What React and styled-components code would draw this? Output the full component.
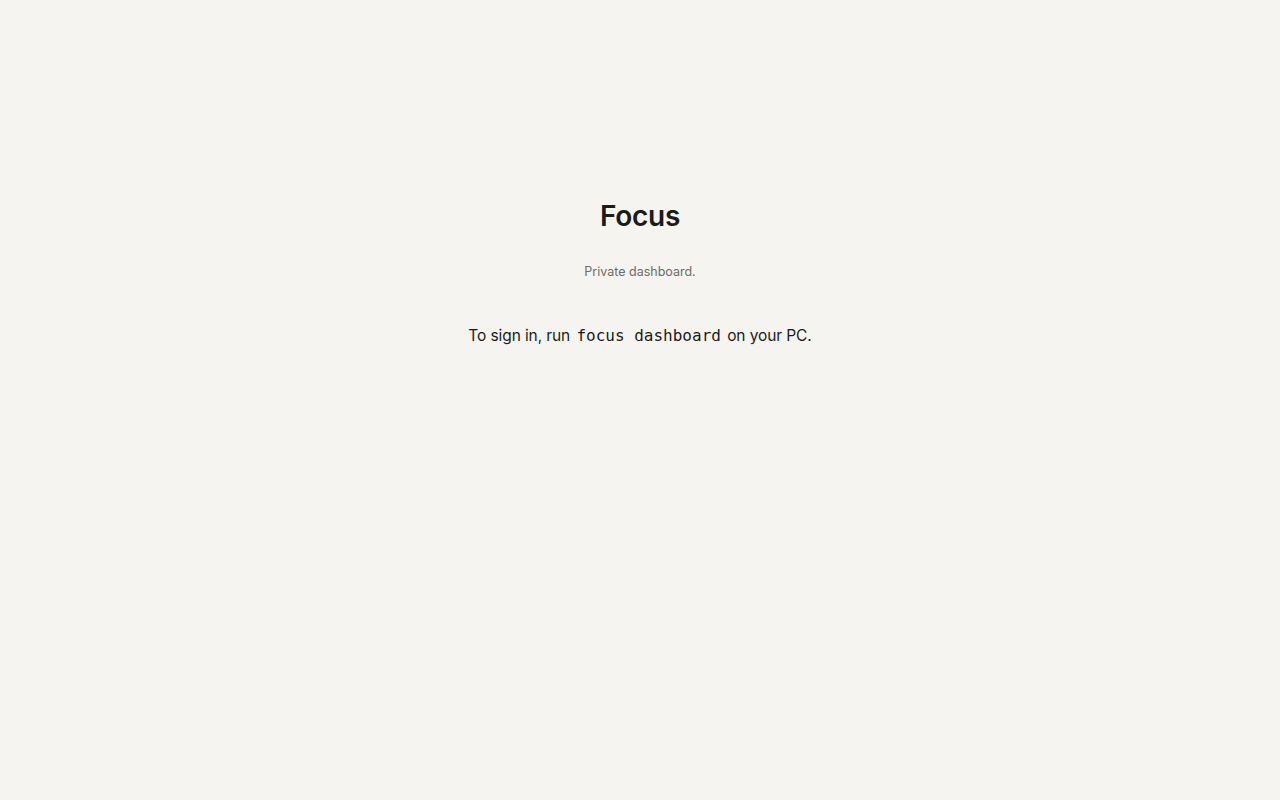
import React from 'react'
import styled, { createGlobalStyle } from 'styled-components'

const Global = createGlobalStyle`
  html, body {
    margin: 0;
    padding: 0;
    background: #f5f4f0;
  }
  body {
    font-family: Inter, "Liberation Sans", sans-serif;
    color: #1c1b19;
  }
`

const Page = styled.main`
  min-height: 100vh;
  display: flex;
  flex-direction: column;
  align-items: center;
  padding-top: 199px;
  box-sizing: border-box;
`

const Title = styled.h1`
  margin: 0;
  font-size: 28px;
  line-height: 34px;
  font-weight: 600;
  letter-spacing: -0.3px;
`

const Subtitle = styled.p`
  margin: 31px 0 0;
  font-size: 12.5px;
  line-height: 16px;
  color: #6e6c67;
`

const Hint = styled.p`
  margin: 44px 0 0;
  font-size: 15.5px;
  line-height: 24px;
  letter-spacing: -0.1px;
`

const Code = styled.code`
  font-family: "DejaVu Sans Mono", "Liberation Mono", monospace;
  font-size: 16px;
  letter-spacing: 0;
  padding: 0 2px;
  white-space: pre;
`

export default function App() {
  return (
    <>
      <Global />
      <Page>
        <Title>Focus</Title>
        <Subtitle>Private dashboard.</Subtitle>
        <Hint>
          To sign in, run <Code>focus dashboard</Code> on your PC.
        </Hint>
      </Page>
    </>
  )
}
